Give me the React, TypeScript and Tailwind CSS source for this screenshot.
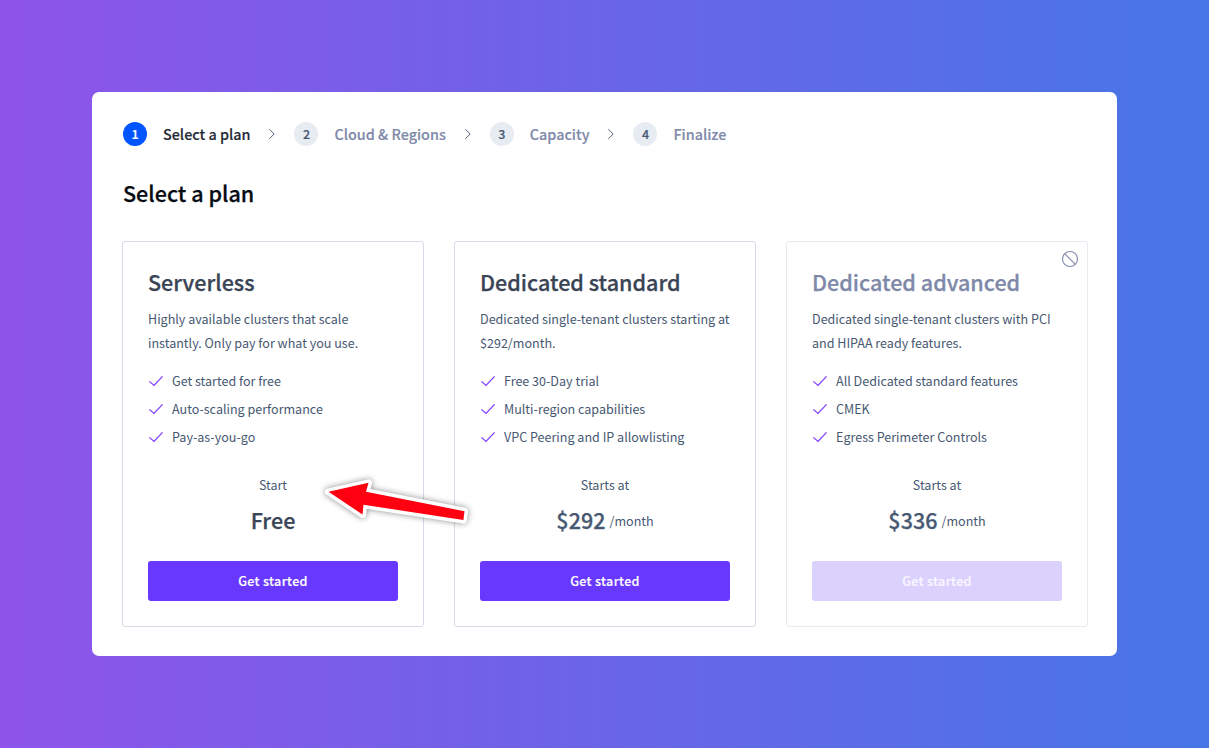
import { ReactNode } from "react";

type Plan = {
  name: string;
  lines: [string, string];
  features: string[];
  label: string;
  price: string;
  unit?: string;
  disabled?: boolean;
};

const plans: Plan[] = [
  {
    name: "Serverless",
    lines: ["Highly available clusters that scale", "instantly. Only pay for what you use."],
    features: ["Get started for free", "Auto-scaling performance", "Pay-as-you-go"],
    label: "Start",
    price: "Free",
  },
  {
    name: "Dedicated standard",
    lines: ["Dedicated single-tenant clusters starting at", "$292/month."],
    features: ["Free 30-Day trial", "Multi-region capabilities", "VPC Peering and IP allowlisting"],
    label: "Starts at",
    price: "$292",
    unit: "/month",
  },
  {
    name: "Dedicated advanced",
    lines: ["Dedicated single-tenant clusters with PCI", "and HIPAA ready features."],
    features: ["All Dedicated standard features", "CMEK", "Egress Perimeter Controls"],
    label: "Starts at",
    price: "$336",
    unit: "/month",
    disabled: true,
  },
];

function Check() {
  return (
    <svg width="16" height="16" viewBox="0 0 16 16" fill="none" className="shrink-0">
      <path d="M1.4 8.4 6 12.5 14.6 3.4" stroke="#7a3dff" strokeWidth="1.25" />
    </svg>
  );
}

function Chevron() {
  return (
    <svg width="8" height="12" viewBox="0 0 8 12" fill="none" className="shrink-0">
      <path d="M1.3 1.2 6.2 6 1.3 10.8" stroke="#475872" strokeWidth="0.95" />
    </svg>
  );
}

function Step({ n, active, children }: { n: number; active?: boolean; children: ReactNode }) {
  return (
    <div className="flex items-center gap-4">
      <span
        className={
          active
            ? "flex size-6 items-center justify-center rounded-full bg-[#0055ff] text-[12.55px] leading-6 font-medium text-white [-webkit-text-stroke:0.15px]"
            : "flex size-6 items-center justify-center rounded-full bg-[#e7ecf3] text-[12.55px] leading-6 font-medium text-[#475872] [-webkit-text-stroke:0.15px]"
        }
      >
        {n}
      </span>
      <span
        className={
          active
            ? "text-[14.37px] leading-6 font-medium text-[#242a35] [-webkit-text-stroke:0.15px]"
            : "text-[14.37px] leading-6 font-medium text-[#7e89a9] [-webkit-text-stroke:0.15px]"
        }
      >
        {children}
      </span>
    </div>
  );
}

function Card({ plan }: { plan: Plan }) {
  return (
    <section
      className={
        plan.disabled
          ? "relative h-[386px] w-[302px] rounded-[3px] border border-[#e7ecf3] px-[25px] pt-6"
          : "relative h-[386px] w-[302px] rounded-[3px] border border-[#d6dbe7] px-[25px] pt-6"
      }
    >
      {plan.disabled && (
        <svg width="18" height="18" viewBox="0 0 18 18" fill="none" className="absolute top-2 right-2">
          <circle cx="9" cy="9" r="7.5" stroke="#7e89a9" strokeWidth="1.1" />
          <path d="M3.7 3.7 14.3 14.3" stroke="#7e89a9" strokeWidth="1.1" />
        </svg>
      )}
      <h2
        className={
          plan.disabled
            ? "text-[21.55px] leading-8 font-medium text-[#7e89a9] [-webkit-text-stroke:0.25px]"
            : "text-[21.55px] leading-8 font-medium text-[#394455] [-webkit-text-stroke:0.25px]"
        }
      >
        {plan.name}
      </h2>
      <p className="mt-[9px] text-[12.55px] leading-6 whitespace-nowrap text-[#475872]">
        {plan.lines[0]}
        <br />
        {plan.lines[1]}
      </p>
      <ul className="mt-3 text-[12.55px] leading-7 text-[#475872]">
        {plan.features.map((f) => (
          <li key={f} className="flex items-center gap-2">
            <Check />
            {f}
          </li>
        ))}
      </ul>
      <div className="mt-[22px] text-center text-[12.55px] leading-6 text-[#475872]">{plan.label}</div>
      <div className="mt-2 flex h-8 items-center justify-center gap-1 text-[#475872]">
        <span
          className={
            plan.unit
              ? "pb-0.5 text-[21.55px] leading-8 font-medium [-webkit-text-stroke:0.25px]"
              : "pb-0.5 text-[21.55px] leading-8 font-medium text-[#394455] [-webkit-text-stroke:0.25px]"
          }
        >
          {plan.price}
        </span>
        {plan.unit && <span className="text-[12.55px] leading-8">{plan.unit}</span>}
      </div>
      <button
        disabled={plan.disabled}
        className={
          plan.disabled
            ? "mt-6 h-10 w-full rounded-[3px] bg-[#dad1fd] text-[12.55px] font-medium tracking-[0.33px] text-white/80 [-webkit-text-stroke:0.15px]"
            : "mt-6 h-10 w-full rounded-[3px] bg-[#6938ff] text-[12.55px] font-medium tracking-[0.33px] text-white [-webkit-text-stroke:0.15px]"
        }
      >
        Get started
      </button>
    </section>
  );
}

export default function App() {
  return (
    <div className="h-[748px] w-[1209px] bg-[linear-gradient(to_right,#8e54e9,#4776e6)] px-[92px] py-[92px] font-['Noto_Sans_CJK_SC',sans-serif]">
      <main className="relative h-[564px] w-[1025px] rounded-[7px] bg-white pt-[30px] pl-[30px]">
        <nav className="ml-px flex h-6 items-center gap-[18px]">
          <Step n={1} active>Select a plan</Step>
          <Chevron />
          <Step n={2}>Cloud &amp; Regions</Step>
          <Chevron />
          <Step n={3}>Capacity</Step>
          <Chevron />
          <Step n={4}>Finalize</Step>
        </nav>
        <h1 className="mt-[31px] ml-px text-[21.55px] leading-8 font-medium text-[#060c12] [-webkit-text-stroke:0.25px]">
          Select a plan
        </h1>
        <div className="mt-8 flex gap-[30px]">
          {plans.map((p) => (
            <Card key={p.name} plan={p} />
          ))}
        </div>
        <svg
          width="190"
          height="80"
          viewBox="0 0 190 80"
          className="absolute top-[368px] left-[208px] overflow-visible drop-shadow-[0_0px_3px_rgba(0,0,0,0.45)]"
        >
          <path
            d="M28.5 31.8 68.5 22.8 66 31.8 164.5 51.2 163.4 60 63.5 44.8 62.5 54.5Z"
            fill="#ff0010"
            stroke="#fff"
            strokeWidth="7"
            strokeLinejoin="round"
            paintOrder="stroke"
          />
        </svg>
      </main>
    </div>
  );
}
